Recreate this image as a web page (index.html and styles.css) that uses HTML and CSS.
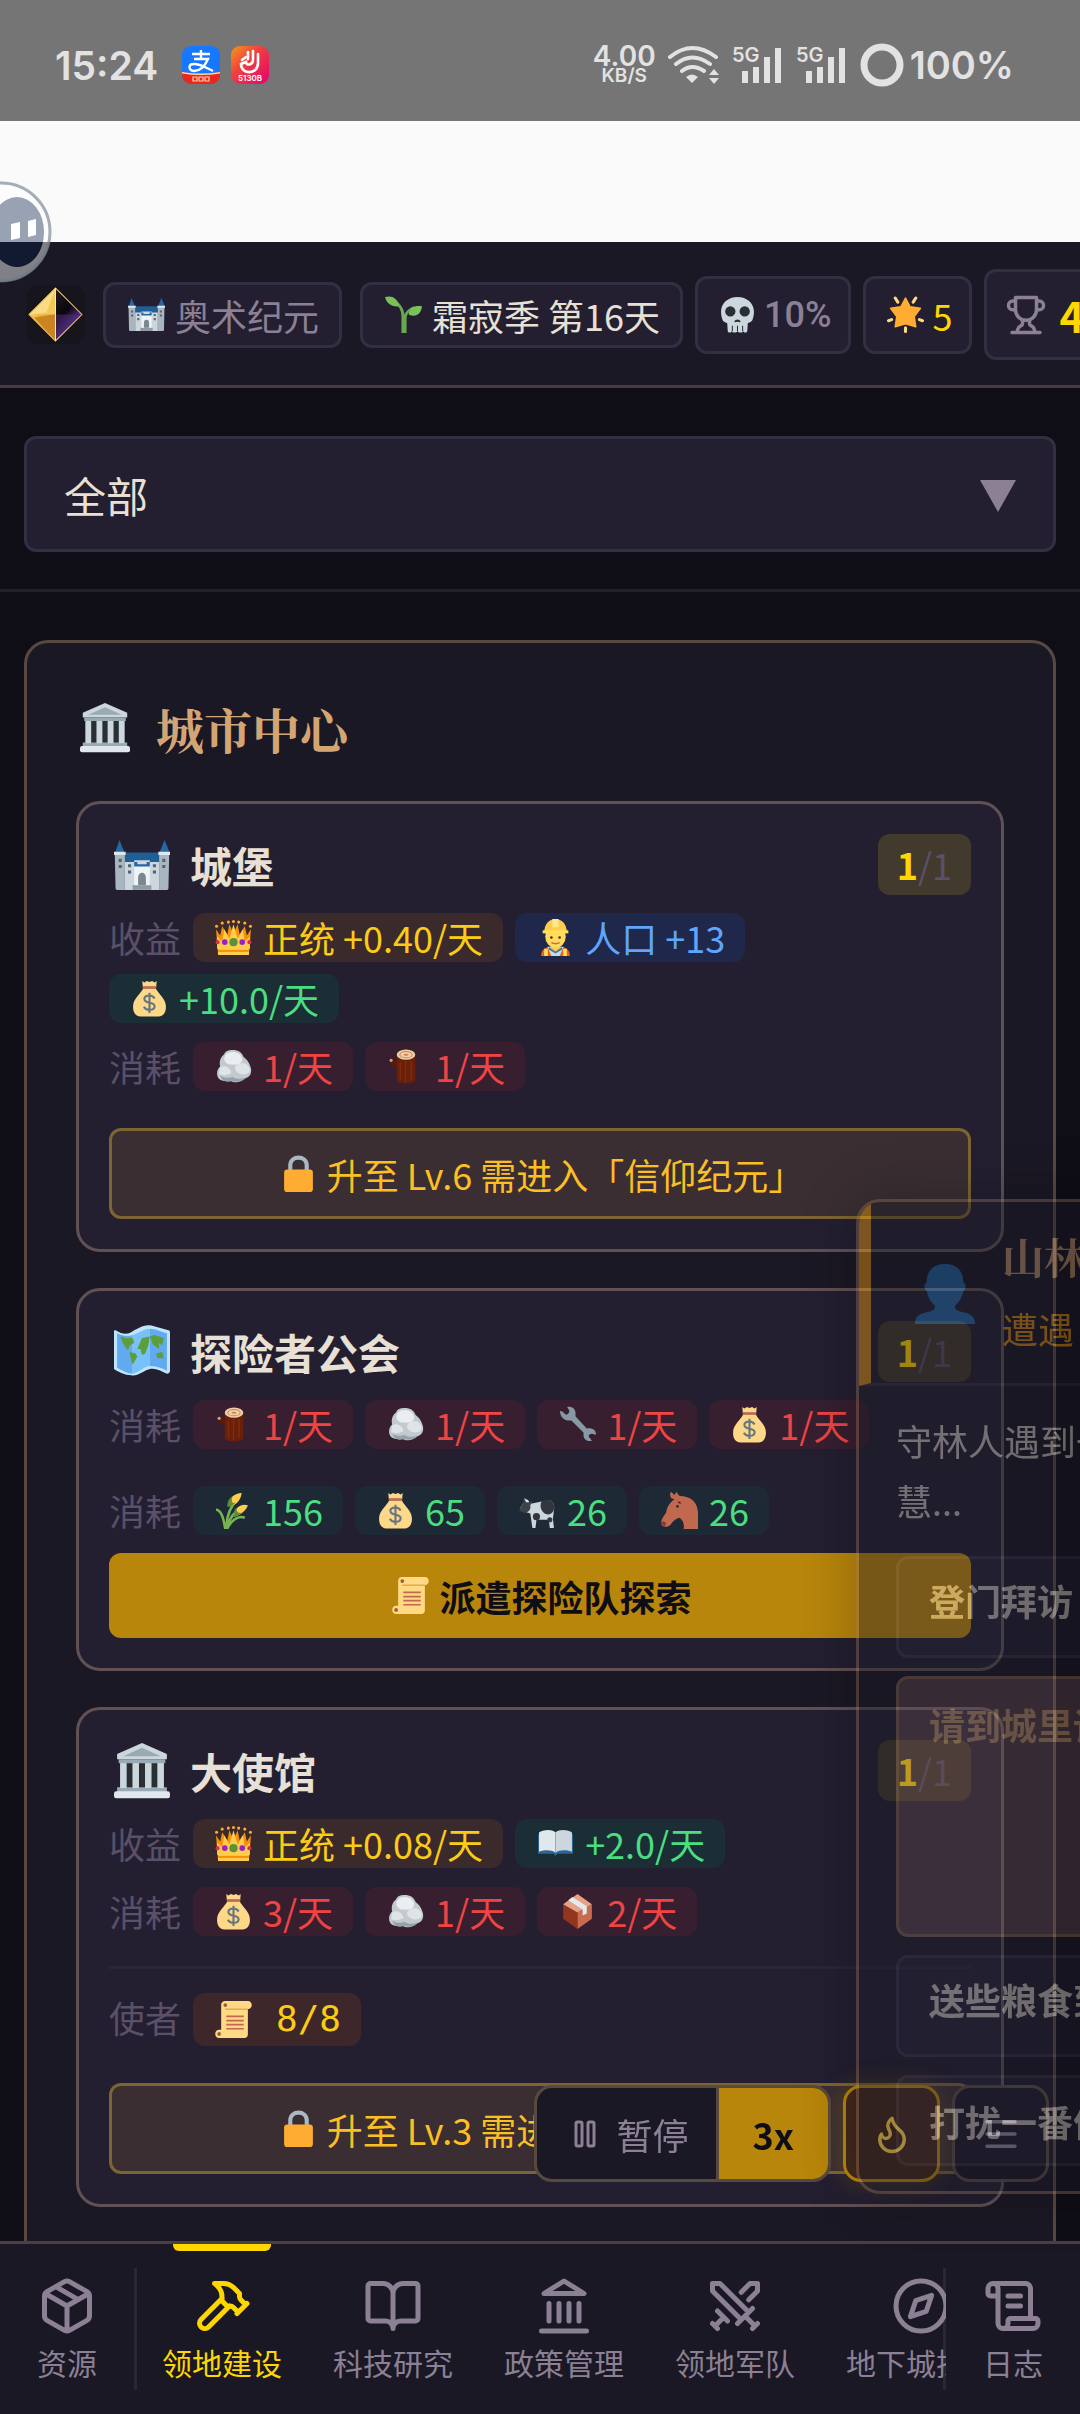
FILE: index.html
```html
<!DOCTYPE html>
<html lang="zh-CN">
<head>
    <meta charset="UTF-8">
    <meta name="viewport" content="width=device-width, initial-scale=1.0">
    <title>奥术纪元</title>
    <link rel="stylesheet" href="styles.css">
</head>
<body>
    <!-- shared icons -->
    <svg class="sprite" aria-hidden="true">
        <symbol id="castle" viewBox="0 0 36 36">
            <path d="M7 10h22v10H7z" fill="#1f5f96"/>
            <path d="M3.500 2 7 10.500H.5zM32.500 2 36 10.500h-7z" fill="#2468a2"/>
            <path d="M.5 10.500H7V34H2a1 1 0 0 1-1-1zM29 10.500h6.500L35 33a1 1 0 0 1-1 1h-5z" fill="#a9b5bf"/>
            <path d="M0 9.500h7.500v2H0zM28.500 9.500H36v2h-7.500z" fill="#dfe7ec"/>
            <path d="M7 16h6v-1h10v1h6v18H7z" fill="#cdd6dd"/>
            <path d="M13 18h10v16H13z" fill="#eef3f6"/>
            <path d="M13 16h2v1.500h6V16h2v3H13z" fill="#2468a2"/>
            <path d="M15.500 26a2.500 3 0 0 1 5 0v5h-5z" fill="#7a8791"/>
            <path d="M12 31h12v3H12z" fill="#8d99a3"/>
            <path d="M3 14h2v2H3zm0 4h2v2H3zm28-4h2v2h-2zm0 4h2v2h-2zM9 17.500h2v2H9zm0 4h2v2H9zm16-4h2v2h-2zm0 4h2v2h-2z" fill="#546472"/>
        </symbol>
        <symbol id="sprout" viewBox="0 0 36 36">
            <path d="M16 36V20C16 12 12 8 6 5l2-2c6 3 10 8 11 15 1-3 4-6 9-8l1 2c-6 3-8 6-8 11v13z" fill="#6aa84f"/>
            <path d="M0 1c7-2 12 1 14 9C7 11 2 8 0 1zM36 10c-1 8-6 11-13 8 1-7 6-9 13-8z" fill="#7cc05a"/>
        </symbol>
        <symbol id="skull" viewBox="0 0 36 36">
            <path d="M18 1c9 0 16 6 16 14 0 3-.5 5-1 7-.5 3-3 4-5 4.500l-.5 7.500c0 1-1 1.500-2 1.500s-1.500-.5-2-1.500c-.5 1-1 1.500-2.500 1.500S18.500 35 18 34c-.5 1-1.500 1.500-3 1.500s-2-.5-2.500-1.500c-.5 1-1 1.500-2 1.500s-2-.5-2-1.500L8 26.500C6 26 3.500 25 3 22c-.5-2-1-4-1-7C2 7 9 1 18 1z" fill="#ccd6dd"/>
            <circle cx="11" cy="15" r="5" fill="#292f33"/><circle cx="25" cy="15" r="5" fill="#292f33"/>
            <path d="M15 25c.5-3 5.500-3 6 0 0 1-2 0-3 0s-3 1-3 0z" fill="#292f33"/>
            <path d="M13 29v5M18 29v5M23 29v5" stroke="#292f33"/>
        </symbol>
        <symbol id="glow" viewBox="0 0 36 36">
            <path d="m18 2 4.500 8.500 10 1.500-6 8 1.500 10-10-3-10 3 1.500-10-6-8 10-1.500z" fill="#ffac33" stroke="#ffac33" stroke-width="1.500" stroke-linejoin="round"/>
            <path d="m8 2 2.500 4M28 2l-2.500 4M1.500 24l3-1M34.500 24l-3-1M18 31v3.500" stroke="#ffd983" stroke-width="3" stroke-linecap="round"/>
        </symbol>
        <symbol id="bank" viewBox="0 0 36 36">
            <path d="M4 12h28v17H4z" fill="#b5c1ca"/>
            <path d="M8 12h4v17H8zm8 0h4v17h-4zm8 0h4v17h-4z" fill="#292f33"/>
            <path d="M18 0 34 7v3.500H2V7z" fill="#ccd6dd"/><path d="m18 3 12 5.500H6z" fill="#99aab5"/>
            <path d="M3 10.500h30V13H3zM2 28.500h32V32H2z" fill="#99aab5"/>
            <path d="M4 13h4v16H4zm8 0h4v16h-4zm8 0h4v16h-4zm8 0h4v16h-4z" fill="#ccd6dd"/>
            <rect y="31" width="36" height="4.500" rx="1.500" fill="#e1e8ed"/>
        </symbol>
        <symbol id="crown" viewBox="0 0 36 36">
            <path d="m2 23-1-13 4 6 2-9 5 8 2-10 4 9 4-9 2 10 5-8 2 9 4-6-1 13z" fill="#f4900c"/>
            <path d="m3 35-1-18 5 5 2-12 5 9 4-14 4 14 5-9 2 12 5-5-1 18z" fill="#ffcc4d"/>
            <path d="M2 22h32v7H2z" fill="#ffcc4d"/>
            <path d="M3 30h30v2H3z" fill="#f4900c"/>
            <circle cx="18" cy="22.500" r="4" fill="#5c913b"/><circle cx="9.500" cy="22.500" r="2.700" fill="#9b1fc1"/><circle cx="26.500" cy="22.500" r="2.700" fill="#9b1fc1"/><circle cx="2.500" cy="22.500" r="2" fill="#dd2e44"/><circle cx="33.500" cy="22.500" r="2" fill="#dd2e44"/>
            <g fill="#ffac33"><circle cx="1.500" cy="7" r="1.500"/><circle cx="7" cy="4" r="1.500"/><circle cx="13" cy="3" r="1.500"/><circle cx="18" cy="2.500" r="1.500"/><circle cx="23" cy="3" r="1.500"/><circle cx="29" cy="4" r="1.500"/><circle cx="34.500" cy="7" r="1.500"/></g>
        </symbol>
        <symbol id="worker" viewBox="0 0 36 36">
            <path d="M4 36c0-6 3-8 9-9h10c6 1 9 3 9 9z" fill="#f4600c"/>
            <path d="m10 27 4 9h8l4-9z" fill="#bdddf4"/><path d="M7 29h3.500v7H7zM25.500 29H29v7h-3.500z" fill="#ffe15a"/>
            <path d="M14 23h8v6c-2 3-6 3-8 0z" fill="#f9ca55"/><path d="M12 27.500l6 4 6-4 1 2-7 4-7-4z" fill="#55748c"/>
            <ellipse cx="18" cy="17" rx="10" ry="11" fill="#ffdc5d"/>
            <path d="M7 13C7 5 12 0 18 0s11 5 11 13z" fill="#ffcc4d"/><path d="M15 0h6v8h-6z" fill="#ffe88a"/><path d="M5.500 11h25v3h-25z" fill="#ffe15a"/>
            <circle cx="14" cy="18" r="1.300" fill="#662113"/><circle cx="22" cy="18" r="1.300" fill="#662113"/><path d="M14 23q4 2 8 0" fill="none" stroke="#c1694f" stroke-width="1.500"/>
        </symbol>
        <symbol id="bag" viewBox="0 0 36 36">
            <path d="m11 1 2 1.500L15.500 1 18 2l2.500-1L23 2.500 25 1l-.5 6h-13z" fill="#fdd888"/>
            <path d="M12 8h12c3 6 10 10 10 18 0 6-3 9.500-7 9.500H9c-4 0-7-3.500-7-9.500C2 18 9 14 12 8z" fill="#fdd888"/>
            <path d="M11.500 6h13v2.500h-13z" fill="#bf6952"/>
            <path d="M23 18c-1-2-3-3-5-3-3 0-5 1.500-5 3.500 0 5 10 2.500 10 7 0 2-2 3.500-5 3.500-2 0-4.500-1-5.500-3M18 12.500V32" fill="none" stroke="#67757f" stroke-width="2"/>
        </symbol>
        <symbol id="rock" viewBox="0 0 36 36">
            <path d="M9 6c1-3 4-4 8-4 6 0 9 2 11 7 3 2 6 6 7 11 1 6-2 9-7 10-3 4-9 4-13 2-7 1-13-1-13-7 0-3 1-5 3-7-1-5 0-9 4-12z" fill="#c2cace"/>
            <path d="M10 7c2-4 13-5 16 2 2 5-3 8-8 7-6 1-11-3-8-9z" fill="#eaeef0"/>
            <path d="M22 16c6-3 11 0 12 5 0 4-5 6-10 4s-6-7-2-9zM5 19c4-3 10 0 11 5-3 3-10 3-12 1z" fill="#dfe4e7"/>
            <path d="M5 27c5 3 9 2 12 1 4 3 8 2 13 1-4 5-9 4-14 3-5 2-9 0-11-5z" fill="#95a2aa"/>
        </symbol>
        <symbol id="log" viewBox="0 0 36 36">
            <path d="m4 12 2-1 7 4-1 6-8-5z" fill="#5c1a04"/><circle cx="4" cy="12" r="1.500" fill="#d99e82"/>
            <path d="M9.500 6H27.500v25c0 4-18 5-18 0z" fill="#69200a"/><path d="M13 14v17M18 13v20M23.500 13v18" stroke="#812b0e" stroke-width="1.500"/>
            <ellipse cx="18.500" cy="6.500" rx="9" ry="5" fill="#f2cfa5"/><ellipse cx="18.500" cy="6.500" rx="6" ry="3" fill="none" stroke="#c8865a" stroke-width="1"/><ellipse cx="18.500" cy="6.500" rx="2.500" ry="1" fill="#c8865a"/>
        </symbol>
        <symbol id="lock" viewBox="0 0 36 36">
            <path d="M10 17V10c0-10 16-10 16 0v7" fill="none" stroke="#aab8c2" stroke-width="4"/>
            <rect x="4" y="14" width="28" height="22" rx="3" fill="#ffac33"/>
        </symbol>
        <symbol id="map" viewBox="0 0 36 36">
            <path d="M1 4c5 3 8 3 12 0 4-2 7-4 11-3l11 3c1 0 1 1 1 2v24c0 1-1 2-2 2-4-2-8-4-11-3-4 1-8 5-12 4-4 0-8-2-11-4V5c0-1 0-1 1-1z" fill="#bfe5fc"/>
            <path d="M2 6c4 2 7 2 10 1v25c-3 0-7-2-10-4z" fill="#62aaf0"/><path d="M12 7c4-1 7-4 11-4v24c-3 0-7 4-11 5z" fill="#78c0fa"/><path d="M23 3c4 0 7 2 11 3v24c-4-2-7-3-11-3z" fill="#62aaf0"/>
            <path d="m4 8 4 1 4 0 1 3-3 2-1 3-3-4zM10 18l4 1 1 2-3 5-1-3zM15 16l3-7 5-1-1 6-2 5-2 1-1-4zM23 8l3-1 6 2-1 5-2-2 0 4-4-3zM27 19l4-1 1 4-4 0z" fill="#5c9e3c"/>
        </symbol>
        <symbol id="wrench" viewBox="0 0 36 36">
            <path d="M1 5c2-1 4 2 5 3 2 1 4-1 4-3 0-2-2-3-2-4 6-1 9 3 8 9l11 12c5-1 9 1 9 6-1 0-3-1-4-1-3 0-4 3-2 4l2 3c-6 1-9-3-8-8L12 14C6 15 1 11 1 5z" fill="#8899a6"/>
        </symbol>
        <symbol id="corn" viewBox="0 0 36 36">
            <path d="M11 36C11 20 17 12 22 7M12 36c2-13 8-17 14-20M10 36C8 24 6 18 1 17M12 35c6-10 12-12 17-10" fill="none" stroke="#77b255" stroke-width="2.500"/>
            <path d="M13 12c1-6 6-11 13-11-1 7-5 12-12 13zM18 21c3-6 7-10 14-8-2 5-6 9-13 11z" fill="#ffcc4d"/>
            <path d="M12 14c0-6 3-8 5-10-1 5-1 8 3 6-2 3-5 5-8 4zM18 24c0-5 1-7 3-9 0 4 1 6 5 5-3 3-5 4-8 4z" fill="#5c913b"/>
        </symbol>
        <symbol id="cow" viewBox="0 0 36 36">
            <path d="M9 12 28 8c5 0 7 4 6 10l-1 8 1 9h-4l-1-8H17l-1 8h-3l-2-14-6-2-4-3 3-5z" fill="#ccd6dd"/>
            <path d="M22 9c4-2 11-2 12 4s-2 8-5 9c-6 0-10-7-7-13z" fill="#31373d"/><circle cx="17" cy="24" r="3.500" fill="#31373d"/><circle cx="30" cy="27" r="2.500" fill="#31373d"/>
            <path d="m5 6 4 4 4-1-2 4c1 5-3 8-7 7l-4-2 4-7z" fill="#3b4348"/><path d="M5 6 9 8l1 2-3 0z" fill="#e1e8ed"/>
        </symbol>
        <symbol id="horse" viewBox="0 0 36 36">
            <path d="M10 6C8 3 9 0 10 0l3 3 2-3 3 4c11 0 18 6 18 17v15H22c1-5-1-9-4-11-4 1-6 3-9 7-3 3-9 2-9-2 0-3 3-7 5-10 1-6 3-9 8-13z" fill="#c1694f"/>
            <path d="M16 10c2-2 4 0 3 2z" fill="#662113"/><circle cx="16" cy="14" r="1.400" fill="#292f33"/><path d="M0 29c2-1 4 0 5 1l-1 3c-3 0-4-2-4-4z" fill="#8a3b2c"/>
        </symbol>
        <symbol id="scroll" viewBox="0 0 36 36">
            <path d="M6 4c0-3 2-4 4-4h22c5 0 5 8 0 8v24c0 3-2 4-4 4H4c-5 0-5-8 0-8h2z" fill="#ffd983"/>
            <path d="M10 8h22" stroke="#e8a94c" stroke-width="1.500"/><circle cx="10" cy="4" r="1.800" fill="#9c5a3c"/><circle cx="4" cy="32" r="1.800" fill="#9c5a3c"/>
            <path d="M11 15h17M11 19h17M11 23h17M11 27h17" stroke="#c1694f" stroke-width="1.700"/>
        </symbol>
        <symbol id="book" viewBox="0 0 36 36">
            <path d="M1 9h34v19H20l-2 2-2-2H1z" fill="#2a6797"/>
            <path d="M2 7c6-3 12-3 16 0v20c-4-3-10-3-16-1z" fill="#e1e8ed"/><path d="M34 7c-6-3-12-3-16 0v20c4-3 10-3 16-1z" fill="#ccd6dd"/><path d="M18 7v20" stroke="#99aab5"/>
        </symbol>
        <symbol id="crate" viewBox="0 0 36 36">
            <path d="M4 11 18 19v16L4 25z" fill="#93341d"/><path d="m18 19 14-8v14L18 35z" fill="#c96b4e"/><path d="M18 1 32 11l-14 8L4 11z" fill="#e8a184"/>
            <path d="m9 7 4-3 14 9v7l-4 2v-6z" fill="#e3eaf0"/>
        </symbol>
        <symbol id="person" viewBox="0 0 36 36">
            <path d="M18 0c7 0 11 4 11 11l1 1c1 1 0 4-1 4-1 5-3 7-5 9 0 3 2 3 5 4 5 1 7 3 7 7H0c0-4 2-6 7-7 3-1 5-1 5-4-2-2-4-4-5-9-1 0-2-3-1-4l1-1C7 4 11 0 18 0z" fill="#2175bb"/>
        </symbol>
    </svg>

    <div class="app">
        <div class="statusbar">
            <span class="clock">15:24</span>
            <svg class="app-badge" viewBox="0 0 38 38">
                <rect width="38" height="38" rx="9" fill="#1677ff"/>
                <path d="M0 26q19 3 38 0v3a9 9 0 0 1-9 9H9a9 9 0 0 1-9-9z" fill="#e8281c"/><path d="M0 26q19 3 38 0v1.500q-19 3-38 0z" fill="#ffd9a0"/>
                <path d="M10 8h18M19 4v9M12 13h14c-3 7-8 12-14 12-6-1-6-7 0-7 7 0 12 4 19 7" fill="none" stroke="#fff" stroke-width="2.400"/>
                <path d="M11 31h4v4h-4zM17 31h4v4h-4zM23 31h4v4h-4z" fill="none" stroke="#ffd0b0" stroke-width="1.200"/>
            </svg>
            <svg class="app-badge" viewBox="0 0 38 38">
                <defs><linearGradient id="pay" x1="0" y1="0" x2="1" y2="1"><stop offset="0" stop-color="#f59a1c"/><stop offset=".4" stop-color="#f0413e"/><stop offset="1" stop-color="#e5006e"/></linearGradient></defs>
                <rect width="38" height="38" rx="9" fill="url(#pay)"/>
                <path d="M17 13V6M22 13V5M27 8v9c0 12-17 12-17 1l5-2c0 4 7 3 7-2M11 14l4-3" fill="none" stroke="#fff" stroke-width="2.600" stroke-linecap="round"/>
                <text x="19" y="35" class="badge-text">5130B</text>
            </svg>
            <div class="status-right">
                <div class="speed"><span>4.00</span><small>KB/S</small></div>
                <svg width="52" height="40" viewBox="0 0 52 40">
                    <path d="M2 12q22-18 46 0M8 19q16-13 34 0M14 26q10-8 22 0" fill="none" stroke="#e2e2e2" stroke-width="4" stroke-linecap="round"/>
                    <path d="M18 32q6-5 12 0l-6 6z" fill="#e2e2e2"/><path d="m46 24 5 6H41zM46 39l5-6H41z" fill="#e2e2e2"/>
                </svg>
                <svg class="signal" viewBox="0 0 52 40"><text x="0" y="17">5G</text><path d="M13 26v12M24 22v16M35 12v26M46 3v35"/></svg>
                <svg class="signal" viewBox="0 0 52 40"><text x="0" y="17">5G</text><path d="M13 26v12M24 22v16M35 12v26M46 3v35"/></svg>
                <svg width="44" height="44" viewBox="0 0 44 44"><circle cx="22" cy="22" r="18" fill="none" stroke="#e2e2e2" stroke-width="7"/></svg>
                <span class="battery">100%</span>
            </div>
        </div>
        <div class="webview-gap"></div>

        <header class="topbar">
            <svg class="logo" viewBox="0 0 58 58">
                <defs>
                    <linearGradient id="gold" x1="0" y1="0" x2="1" y2="1"><stop offset="0" stop-color="#ffe9a0"/><stop offset=".5" stop-color="#f0b13a"/><stop offset="1" stop-color="#a86410"/></linearGradient>
                    <linearGradient id="void" x1="0" y1="0" x2=".6" y2="1"><stop offset="0" stop-color="#231c20"/><stop offset=".5" stop-color="#09060c"/><stop offset="1" stop-color="#8a4fd0"/></linearGradient>
                </defs>
                <rect width="58" height="58" rx="12" fill="#17151c"/>
                <path d="M29 3v52L3 29z" fill="url(#gold)"/><path d="M29 3v26L3 29z" fill="#f6c85a"/><path d="M29 3 20 27 3 29z" fill="#fbdc84"/><path d="M29 29v25L8 32z" fill="#cc8420"/>
                <path d="M29 3v52l26-26z" fill="url(#void)"/><path d="M29 29h26L29 55z" fill="#4b2b78" opacity=".6"/>
                <path d="M29 3 3 29l26 26 26-26z" fill="none" stroke="#e8c070" stroke-width="1"/><path d="M29 3v52" stroke="#ffe9a8"/>
            </svg>
            <div class="stat era"><svg class="emo"><use href="#castle"/></svg>奥术纪元</div>
            <div class="stats">
                <div class="stat"><svg class="emo"><use href="#sprout"/></svg>霜寂季 第16天</div>
                <div class="stat mid risk"><svg class="emo"><use href="#skull"/></svg>10%</div>
                <div class="stat mid gold"><svg class="emo"><use href="#glow"/></svg>5</div>
                <div class="stat tall gold">
                    <svg class="line" viewBox="0 0 24 24"><path d="M6 9H4.500a2.500 2.500 0 0 1 0-5H6M18 9h1.500a2.500 2.500 0 0 0 0-5H18M4 22h16M10 14.660V17c0 .55-.47.98-.97 1.210C7.850 18.750 7 20.240 7 22M14 14.660V17c0 .55.47.98.97 1.210C16.150 18.750 17 20.240 17 22M18 2H6v7a6 6 0 0 0 12 0V2Z"/></svg>42
                </div>
            </div>
        </header>

        <div class="filter">
            <select aria-label="分类"><option>全部</option></select>
            <svg class="caret" viewBox="0 0 36 32"><path d="M0 0h36L18 32z"/></svg>
        </div>

        <main>
            <section class="district">
                <h2><svg><use href="#bank"/></svg>城市中心</h2>

                <article class="building">
                    <div class="head">
                        <svg><use href="#castle"/></svg><h3>城堡</h3>
                        <span class="count"><b>1</b>/1</span>
                    </div>
                    <div class="row">
                        <span class="label">收益</span>
                        <span class="chip amber"><svg class="emo"><use href="#crown"/></svg>正统 +0.40/天</span>
                        <span class="chip blue"><svg class="emo"><use href="#worker"/></svg>人口 +13</span>
                        <span class="chip green"><svg class="emo"><use href="#bag"/></svg>+10.0/天</span>
                    </div>
                    <div class="row">
                        <span class="label">消耗</span>
                        <span class="chip red"><svg class="emo"><use href="#rock"/></svg>1/天</span>
                        <span class="chip red"><svg class="emo"><use href="#log"/></svg>1/天</span>
                    </div>
                    <div class="locked"><svg class="emo"><use href="#lock"/></svg>升至 Lv.6 需进入「信仰纪元」</div>
                </article>

                <article class="building">
                    <div class="head">
                        <svg><use href="#map"/></svg><h3>探险者公会</h3>
                        <span class="count"><b>1</b>/1</span>
                    </div>
                    <div class="row">
                        <span class="label">消耗</span>
                        <span class="chip red"><svg class="emo"><use href="#log"/></svg>1/天</span>
                        <span class="chip red"><svg class="emo"><use href="#rock"/></svg>1/天</span>
                        <span class="chip red"><svg class="emo"><use href="#wrench"/></svg>1/天</span>
                        <span class="chip red"><svg class="emo"><use href="#bag"/></svg>1/天</span>
                    </div>
                    <div class="row price">
                        <span class="label">消耗</span>
                        <span class="chip teal"><svg class="emo"><use href="#corn"/></svg>156</span>
                        <span class="chip teal"><svg class="emo"><use href="#bag"/></svg>65</span>
                        <span class="chip teal"><svg class="emo"><use href="#cow"/></svg>26</span>
                        <span class="chip teal"><svg class="emo"><use href="#horse"/></svg>26</span>
                    </div>
                    <button class="dispatch"><svg class="emo"><use href="#scroll"/></svg>派遣探险队探索</button>
                </article>

                <article class="building">
                    <div class="head">
                        <svg><use href="#bank"/></svg><h3>大使馆</h3>
                        <span class="count"><b>1</b>/1</span>
                    </div>
                    <div class="row">
                        <span class="label">收益</span>
                        <span class="chip amber"><svg class="emo"><use href="#crown"/></svg>正统 +0.08/天</span>
                        <span class="chip green"><svg class="emo"><use href="#book"/></svg>+2.0/天</span>
                    </div>
                    <div class="row">
                        <span class="label">消耗</span>
                        <span class="chip red"><svg class="emo"><use href="#bag"/></svg>3/天</span>
                        <span class="chip red"><svg class="emo"><use href="#rock"/></svg>1/天</span>
                        <span class="chip red"><svg class="emo"><use href="#crate"/></svg>2/天</span>
                    </div>
                    <div class="row envoys">
                        <span class="label">使者</span>
                        <span class="chip envoy"><svg class="emo"><use href="#scroll"/></svg>8/8</span>
                    </div>
                    <div class="locked"><svg class="emo"><use href="#lock"/></svg>升至 Lv.3 需进入「信仰纪元」</div>
                </article>
            </section>
        </main>

        <nav class="tabs">
            <button class="tab edge"><svg class="line" viewBox="0 0 24 24"><path d="M11 21.730a2 2 0 0 0 2 0l7-4A2 2 0 0 0 21 16V8a2 2 0 0 0-1-1.730l-7-4a2 2 0 0 0-2 0l-7 4A2 2 0 0 0 3 8v8a2 2 0 0 0 1 1.730zM12 22V12M3.290 7 12 12l8.710-5M7.500 4.270l9 5.150"/></svg>资源</button>
            <div class="scroller">
                <button class="tab active"><svg class="line" viewBox="0 0 24 24"><path d="m15 12-8.373 8.373a1 1 0 1 1-3-3L12 9M18 15l4-4M21.500 11.500l-1.914-1.914A2 2 0 0 1 19 8.172V7l-2.260-2.260a6 6 0 0 0-4.202-1.756L9 2.960l.92.82A6.180 6.180 0 0 1 12 8.400V10l2 2h1.172a2 2 0 0 1 1.414.586L18.500 14.500"/></svg>领地建设</button>
                <button class="tab"><svg class="line" viewBox="0 0 24 24"><path d="M12 7v14M3 18a1 1 0 0 1-1-1V4a1 1 0 0 1 1-1h5a4 4 0 0 1 4 4 4 4 0 0 1 4-4h5a1 1 0 0 1 1 1v13a1 1 0 0 1-1 1h-6a3 3 0 0 0-3 3 3 3 0 0 0-3-3z"/></svg>科技研究</button>
                <button class="tab"><svg class="line" viewBox="0 0 24 24"><path d="M3 22h18M6 18v-7M10 18v-7M14 18v-7M18 18v-7M12 2l8 5H4z"/></svg>政策管理</button>
                <button class="tab"><svg class="line" viewBox="0 0 24 24"><path d="M14.500 17.500 3 6V3h3l11.500 11.500M13 19l6-6M16 16l4 4M19 21l2-2M14.500 6.500 18 3h3v3l-3.500 3.500M5 14l4 4M7 17l-3 3M3 19l2 2"/></svg>领地军队</button>
                <button class="tab"><svg class="line" viewBox="0 0 24 24"><circle cx="12" cy="12" r="10"/><path d="m16.240 7.760-2.120 6.360-6.360 2.120 2.120-6.360z"/></svg>地下城探险</button>
            </div>
            <button class="tab edge"><svg class="line" viewBox="0 0 24 24"><path d="M15 12h-5M15 8h-5M19 17V5a2 2 0 0 0-2-2H4M8 21h12a2 2 0 0 0 2-2v-1a1 1 0 0 0-1-1H11a1 1 0 0 0-1 1v1a2 2 0 1 1-4 0V5a2 2 0 1 0-4 0v2a1 1 0 0 0 1 1h3"/></svg>日志</button>
        </nav>
    </div>

    <!-- floating controls -->
    <div class="controls">
        <div class="speedbox">
            <button class="pause"><svg class="line" viewBox="0 0 24 24"><rect x="6" y="4" width="4" height="16" rx="1"/><rect x="14" y="4" width="4" height="16" rx="1"/></svg>暂停</button>
            <button class="rate">3x</button>
        </div>
        <button class="round fire" aria-label="事件"><svg class="line" viewBox="0 0 24 24"><path d="M8.500 14.500A2.500 2.500 0 0 0 11 12c0-1.380-.5-2-1-3-1.072-2.143-.224-4.054 2-6 .5 2.500 2 4.900 4 6.500 2 1.600 3 3.500 3 5.500a7 7 0 1 1-14 0c0-1.153.433-2.294 1-3a2.500 2.500 0 0 0 2.500 2.500z"/></svg></button>
        <button class="round" aria-label="菜单"><svg class="line" viewBox="0 0 24 24"><path d="M4 5h16M4 12h16M4 19h16"/></svg></button>
    </div>

    <!-- encounter card sliding in -->
    <aside class="encounter">
        <div class="encounter-head">
            <svg><use href="#person"/></svg>
            <div><h4>山林隐士</h4><p>遭遇</p></div>
        </div>
        <div class="encounter-body">
            <p>守林人遇到一位隐居的老者，颇有智慧...</p>
            <button>登门拜访</button>
            <button class="special">请到城里详谈</button>
            <button>送些粮食到山中</button>
            <button>打扰一番便离开</button>
        </div>
    </aside>

    <svg class="bubble" viewBox="0 0 52 102">
        <path fill-rule="evenodd" d="M1 1a50 50 0 0 1 0 100H0V1zM17 16a27 35 0 1 0 .1 0z" fill="#fff" opacity=".45"/>
        <ellipse cx="17" cy="51" rx="27" ry="35" fill="#051e46" opacity=".4"/>
        <circle cx="1" cy="51" r="49" fill="none" stroke="#6c7888" stroke-width="3" opacity=".6"/>
        <path d="m11 43 9-2v16l-9 2zM28 40l8-2v16l-8 2z" fill="#fff"/>
    </svg>
</body>
</html>
```
FILE: styles.css
```css
* {
    box-sizing: border-box;
}
body {
    margin: 0;
    background-color: #0f0d16;
    color: #e8e0d4;
    font-family: "Noto Sans CJK SC", sans-serif;
    font-size: 36px;
    overflow: hidden;
}
h2, h3, h4, p {
    margin: 0;
}
button, select {
    font-family: inherit;
    font-size: 36px;
    color: inherit;
    cursor: pointer;
}
.sprite {
    position: absolute;
    width: 0;
    height: 0;
}
.app {
    display: flex;
    flex-direction: column;
    height: 100vh;
}
.emo {
    width: 37px;
    height: 37px;
    margin: 0 4px;
    flex: none;
}
.line {
    fill: none;
    stroke: currentColor;
    stroke-width: 2;
    stroke-linecap: round;
    stroke-linejoin: round;
    flex: none;
}

/* status bar */
.statusbar {
    display: flex;
    align-items: center;
    height: 121px;
    padding: 9px 66px 0 55px;
    flex: none;
    background-color: #757575;
    color: #e2e2e2;
    font-family: Inter, sans-serif;
    font-weight: 600;
}
.clock {
    font-size: 39px;
    margin-right: 24px;
}
.app-badge {
    width: 38px;
    height: 38px;
    margin-right: 11px;
}
.badge-text {
    font-size: 8px;
    text-anchor: middle;
    fill: #fff;
}
.status-right {
    display: flex;
    align-items: center;
    gap: 12px;
    margin-left: auto;
}
.speed {
    display: flex;
    flex-direction: column;
    align-items: center;
    font-size: 28px;
    line-height: 22px;
}
.speed small {
    font-size: 19px;
    line-height: 18px;
}
.signal {
    width: 52px;
    height: 40px;
    fill: #e2e2e2;
    stroke: #e2e2e2;
    stroke-width: 6;
}
.signal text {
    font-size: 20px;
    stroke: none;
}
.battery {
    font-size: 38px;
    margin-left: -6px;
}
.webview-gap {
    height: 121px;
    flex: none;
    background-color: #fafafa;
}
.bubble {
    position: absolute;
    left: 0;
    top: 181px;
    width: 52px;
    height: 102px;
}

/* top bar */
.topbar {
    display: flex;
    align-items: center;
    gap: 18px;
    padding: 27px 0 25px 26px;
    flex: none;
    overflow: hidden;
    background-color: #1b1825;
    border-bottom: 3px solid #473c3f;
}
.logo {
    width: 59px;
    height: 59px;
    flex: none;
}
.stats {
    display: flex;
    align-items: center;
    gap: 12px;
}
.stat {
    display: flex;
    align-items: center;
    gap: 6px;
    height: 66px;
    padding: 0 20px 0 18px;
    flex: none;
    background-color: #231f31;
    border: 3px solid #332f42;
    border-radius: 12px;
    white-space: nowrap;
}
.era {
    color: #8b8094;
}
.stat.mid {
    height: 78px;
    gap: 4px;
    padding: 0 17px;
}
.risk {
    color: #8b8094;
    font-family: Roboto, sans-serif;
    font-weight: 500;
}
.gold {
    color: #ffd700;
}
.stat.tall {
    height: 91px;
    gap: 12px;
    font-size: 42px;
    font-weight: bold;
}
.tall .line {
    width: 42px;
    height: 42px;
    color: #8b8094;
}

/* filter */
.filter {
    position: relative;
    padding: 48px 24px 37px;
    flex: none;
    border-bottom: 3px solid #231f2c;
}
.filter select {
    display: block;
    width: 100%;
    height: 116px;
    padding: 0 37px;
    appearance: none;
    background-color: #231f31;
    border: 3px solid #332f42;
    border-radius: 12px;
    font-size: 42px;
}
.caret {
    position: absolute;
    right: 64px;
    top: 92px;
    width: 36px;
    height: 32px;
    fill: #8b8094;
    pointer-events: none;
}

/* buildings */
main {
    flex: 1;
    min-height: 0;
    overflow: hidden;
    padding: 48px 24px;
}
.district {
    padding: 48px 49px 96px;
    background-color: #1b1825;
    border: 3px solid #57493f;
    border-radius: 24px;
}
.district h2 {
    display: flex;
    align-items: center;
    gap: 26px;
    height: 74px;
    margin-bottom: 36px;
    padding-left: 4px;
    color: #d4a574;
    font-family: "Noto Serif CJK SC", "Noto Serif SC", "Noto Sans CJK SC", serif;
    font-size: 48px;
}
.district h2 svg {
    width: 50px;
    height: 50px;
}
.building {
    padding: 30px;
    background-color: #231f31;
    border: 3px solid #5f5154;
    border-radius: 24px;
}
.building + .building {
    margin-top: 36px;
}
.head {
    display: flex;
    align-items: flex-start;
    height: 61px;
    margin-bottom: 18px;
}
.head svg {
    width: 56px;
    height: 56px;
    margin: 3px 20px 2px 5px;
}
.head h3 {
    font-size: 42px;
    line-height: 61px;
}
.count {
    margin-left: auto;
    padding: 0 19px;
    height: 61px;
    line-height: 61px;
    border-radius: 12px;
    background-color: #433a2e;
    color: #5a5068;
}
.count b {
    color: #ffd700;
}
.row {
    display: flex;
    flex-wrap: wrap;
    gap: 12px;
}
.row + .row {
    margin-top: 19px;
}
.row.price {
    margin-top: 37px;
}
.row.envoys {
    margin-top: 30px;
    padding-top: 24px;
    border-top: 3px solid #2a2638;
}
.label {
    color: #5a5068;
    line-height: 48px;
}
.chip {
    display: inline-flex;
    align-items: center;
    gap: 7px;
    height: 49px;
    padding: 0 20px 2px 18px;
    border-radius: 12px;
    white-space: nowrap;
}
.chip .emo {
    margin-top: 2px;
}
.amber {
    background-color: #3a2a2c;
    color: #facc15;
}
.blue {
    background-color: #1f284b;
    color: #60a5fa;
}
.green {
    background-color: #1b2d35;
    color: #4ade80;
}
.teal {
    background-color: #1e2936;
    color: #4ade80;
}
.red {
    background-color: #371f2f;
    color: #ef4444;
}
.envoy {
    height: 53px;
    gap: 20px;
    background-color: #3d272a;
    color: #facc15;
    font-family: "DejaVu Sans Mono", monospace;
}
.locked {
    display: flex;
    justify-content: center;
    align-items: center;
    gap: 6px;
    height: 91px;
    margin-top: 37px;
    background-color: #3a2e32;
    border: 3px solid #7d6533;
    border-radius: 12px;
    color: #fbbf24;
}
.dispatch {
    display: flex;
    justify-content: center;
    align-items: center;
    gap: 6px;
    width: 100%;
    height: 85px;
    margin-top: 18px;
    border: none;
    border-radius: 12px;
    background-color: #b8860b;
    color: #0f0d16;
    font-weight: bold;
}

/* floating controls */
.controls {
    position: fixed;
    right: 31px;
    bottom: 232px;
    display: flex;
    gap: 12px;
}
.speedbox {
    display: flex;
    height: 97px;
    overflow: hidden;
    border: 3px solid #57493f;
    border-radius: 18px;
    background-color: #1b1825;
}
.pause, .rate {
    display: flex;
    align-items: center;
    border: none;
    background: none;
}
.pause {
    gap: 14px;
    padding: 0 27px 0 30px;
    color: #8b8094;
}
.pause .line {
    width: 36px;
    height: 36px;
}
.rate {
    padding: 0 34px;
    border-left: 3px solid #57493f;
    background-color: #b8860b;
    color: #0f0d16;
    font-weight: bold;
}
.round {
    display: flex;
    justify-content: center;
    align-items: center;
    width: 97px;
    height: 97px;
    padding: 0;
    border: 3px solid #57493f;
    border-radius: 18px;
    background-color: #1b1825;
    color: #8b8094;
}
.round .line {
    width: 42px;
    height: 42px;
}
.fire {
    border-color: #b8860b;
    background-color: #42291c;
    color: #ffd24a;
    box-shadow: 0 0 24px rgba(184, 134, 11, 0.3);
}

/* encounter card */
.encounter {
    position: fixed;
    right: -450px;
    bottom: 220px;
    width: 674px;
    overflow: hidden;
    border: 3px solid #8a6a50;
    border-radius: 24px;
    background-color: #1b1825;
    box-shadow: 0 0 60px rgba(0, 0, 0, 0.6);
    opacity: 0.42;
}
.encounter-head {
    display: flex;
    gap: 27px;
    padding: 18px 40px 18px 44px;
    height: 184px;
    border-left: 12px solid #f59e0b;
    border-bottom: 3px solid #332f42;
}
.encounter-head svg {
    width: 60px;
    height: 60px;
    margin-top: 44px;
}
.encounter-head h4 {
    color: #d4a574;
    font-family: "Noto Serif CJK SC", "Noto Serif SC", "Noto Sans CJK SC", serif;
    font-size: 42px;
    line-height: 72px;
}
.encounter-head p {
    color: #f59e0b;
    line-height: 72px;
}
.encounter-body {
    display: flex;
    flex-direction: column;
    gap: 18px;
    padding: 24px 37px 25px;
}
.encounter-body p {
    margin-bottom: 8px;
    line-height: 60px;
}
.encounter-body button {
    height: 102px;
    padding: 0 30px 14px;
    text-align: left;
    background-color: #231f31;
    border: 3px solid #3b364a;
    border-radius: 12px;
    font-weight: bold;
}
.encounter-body button:last-child {
    height: 91px;
    padding-bottom: 0;
}
.encounter-body .special {
    height: 261px;
    padding-bottom: 166px;
    background-color: #5e464a;
    border-color: #8a6a50;
    color: #d4a574;
}

/* bottom tabs */
.tabs {
    display: flex;
    height: 173px;
    padding: 24px 0;
    flex: none;
    background-color: #1b1825;
    border-top: 3px solid #4a3f42;
}
.tab {
    position: relative;
    display: flex;
    flex-direction: column;
    align-items: center;
    gap: 6px;
    padding: 8px 25px 0;
    flex: none;
    border: none;
    background: none;
    color: #8b8094;
    font-size: 30px;
    line-height: 40px;
    white-space: nowrap;
}
.tab .line {
    width: 60px;
    height: 60px;
}
.tab.active {
    color: #ffd700;
}
.tab.active::before {
    content: "";
    position: absolute;
    top: -24px;
    left: 36px;
    right: 36px;
    height: 7px;
    border-radius: 0 0 6px 6px;
    background-color: #ffd700;
}
.edge {
    width: 134px;
}
.scroller {
    display: flex;
    gap: 1px;
    flex: 1;
    min-width: 0;
    margin: -24px 0;
    padding: 24px 3px;
    overflow: hidden;
    background-image: linear-gradient(#2a2636, #2a2636), linear-gradient(#2a2636, #2a2636);
    background-size: 3px 122px;
    background-position: left center, right center;
    background-repeat: no-repeat;
}
```
